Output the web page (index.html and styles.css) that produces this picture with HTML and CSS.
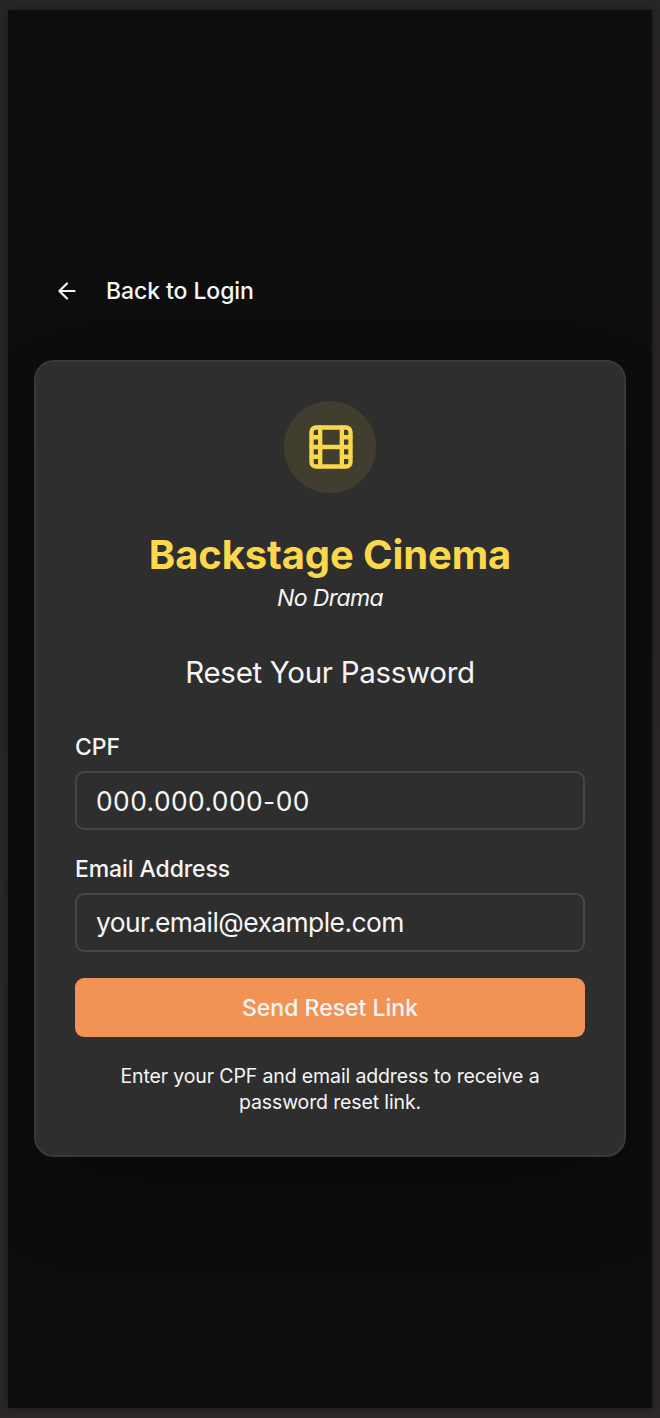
FILE: index.html
```html
<!DOCTYPE html>
<html lang="en">
<head>
<meta charset="utf-8">
<title>Backstage Cinema</title>
<link rel="stylesheet" href="styles.css">
</head>
<body>
<main class="screen">
  <a class="back">
    <svg class="back-icon" viewBox="0 0 24 24"><path d="m12 19-7-7 7-7M19 12H5"/></svg>
    <span class="back-label">Back to Login</span>
  </a>
  <section class="card">
    <div class="badge">
      <svg class="film" viewBox="0 0 24 24"><rect x="3" y="3" width="18" height="18" rx="2"/><path d="M7 3v18M3 7.5h4M3 12h18M3 16.5h4M17 3v18M17 7.5h4M17 16.5h4"/></svg>
    </div>
    <h1 class="title">Backstage Cinema</h1>
    <p class="tagline">No Drama</p>
    <h2 class="subtitle">Reset Your Password</h2>
    <div class="field">
      <label class="label">CPF</label>
      <div class="input digits">000.000.000-00</div>
    </div>
    <div class="field">
      <label class="label">Email Address</label>
      <div class="input">your.email@example.com</div>
    </div>
    <button class="submit">Send Reset Link</button>
    <p class="hint">Enter your CPF and email address to receive a<br>password reset link.</p>
  </section>
</main>
</body>
</html>
```
FILE: styles.css
```css
* { box-sizing: border-box; margin: 0; padding: 0; }
body {
  width: 660px;
  height: 1418px;
  padding: 10px 8px;
  overflow: hidden;
  background: linear-gradient(#282526, #2c2729);
  color: #f5f5f5;
  font-family: Inter, "Liberation Sans", sans-serif;
}
.screen {
  height: 1398px;
  padding: 261px 26px 0;
  background: #0d0d0d;
  box-shadow: 0 1px 8px rgba(0, 0, 0, .4);
  overflow: hidden;
}
.back {
  display: flex;
  align-items: center;
  gap: 26px;
  height: 40px;
  padding-left: 20px;
  font-size: 23px;
  font-weight: 500;
  letter-spacing: -.08px;
}
svg {
  fill: none;
  stroke: currentColor;
  stroke-width: 2;
  stroke-linecap: round;
  stroke-linejoin: round;
}
.back-icon { width: 26px; height: 26px; }
.card {
  height: 797px;
  margin-top: 49px;
  padding: 39px 39px 0;
  border: 2px solid #393939;
  border-radius: 20px;
  background: #2e2e2e;
  box-shadow: 0 41px 82px -20px rgba(0, 0, 0, .35);
  text-align: center;
}
.badge {
  display: flex;
  align-items: center;
  justify-content: center;
  width: 92px;
  height: 92px;
  margin: 0 auto;
  border-radius: 50%;
  background: #423e2f;
  color: #fbd84b;
}
.film { width: 52px; height: 52px; margin: 0 0 1px 1px; }
.title {
  margin-top: 37px;
  color: #fbd84b;
  font-size: 40px;
  line-height: 50px;
  font-weight: 700;
  letter-spacing: -.13px;
}
.tagline {
  margin-top: 4px;
  font-size: 23px;
  line-height: 28px;
  font-style: italic;
  letter-spacing: -.6px;
}
.subtitle {
  margin-top: 41px;
  font-size: 29.5px;
  line-height: 38px;
  font-weight: 400;
  letter-spacing: -.3px;
}
.field { text-align: left; margin-top: 26px; }
.subtitle + .field { margin-top: 43px; }
.label {
  display: block;
  height: 25px;
  margin-bottom: 12px;
  font-size: 23px;
  line-height: 26px;
  font-weight: 500;
  letter-spacing: -.1px;
}
.input {
  height: 59px;
  padding-left: 19px;
  border: 2px solid #464646;
  border-radius: 9px;
  font-size: 26.4px;
  line-height: 55px;
  letter-spacing: -.55px;
}
.digits {
  line-height: 56px;
  letter-spacing: .43px;
}
.submit {
  display: block;
  width: 100%;
  height: 59px;
  padding-top: 1px;
  margin-top: 26px;
  border: 0;
  border-radius: 9px;
  background: #f19355;
  color: #f5f5f5;
  font: 500 23px/58px Inter, sans-serif;
  letter-spacing: 0;
}
.hint {
  margin-top: 26px;
  font-size: 19.5px;
  line-height: 26px;
  letter-spacing: -.13px;
}
```
